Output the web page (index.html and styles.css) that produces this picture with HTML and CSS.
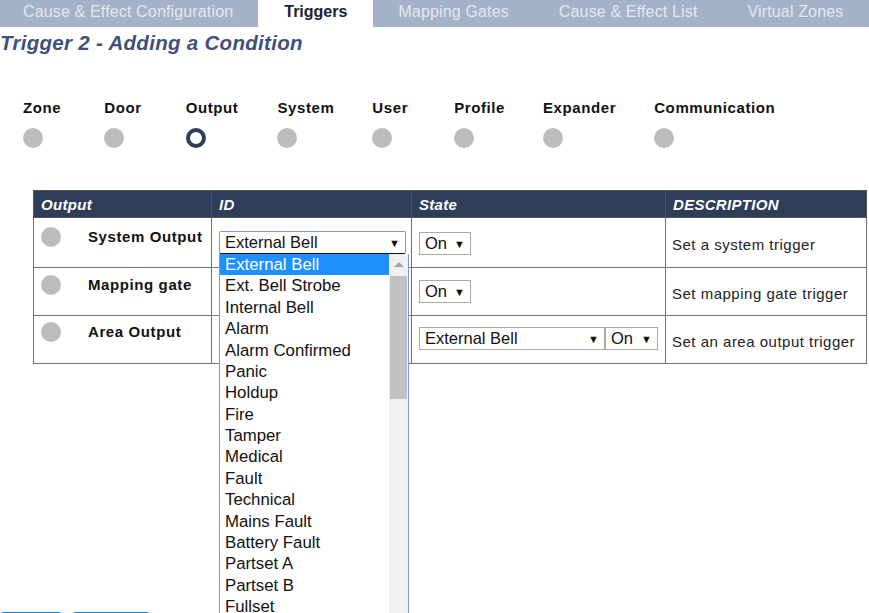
FILE: index.html
```html
<!DOCTYPE html>
<html>
<head>
<meta charset="utf-8">
<link rel="stylesheet" href="styles.css">
</head>
<body>
<nav class="tabs">
  <div class="tab">Cause &amp; Effect Configuration</div>
  <div class="tab active">Triggers</div>
  <div class="tab">Mapping Gates</div>
  <div class="tab">Cause &amp; Effect List</div>
  <div class="tab">Virtual Zones</div>
</nav>
<h1 class="title">Trigger 2 - Adding a Condition</h1>

<div class="steps">
  <div class="step"><span class="step-label">Zone</span><span class="dot"></span></div>
  <div class="step"><span class="step-label">Door</span><span class="dot"></span></div>
  <div class="step"><span class="step-label">Output</span><span class="dot ring"></span></div>
  <div class="step"><span class="step-label">System</span><span class="dot"></span></div>
  <div class="step"><span class="step-label">User</span><span class="dot"></span></div>
  <div class="step"><span class="step-label">Profile</span><span class="dot"></span></div>
  <div class="step"><span class="step-label">Expander</span><span class="dot"></span></div>
  <div class="step"><span class="step-label">Communication</span><span class="dot"></span></div>
</div>

<table class="grid">
  <colgroup>
    <col class="c1"><col class="c2"><col class="c3"><col class="c4">
  </colgroup>
  <thead>
    <tr class="hr"><th>Output</th><th>ID</th><th>State</th><th>DESCRIPTION</th></tr>
  </thead>
  <tbody>
    <tr class="r1">
      <td class="top"><div class="out"><span class="dot"></span><span class="out-label">System Output</span></div></td>
      <td class="top idcell">
        <div class="sel sel-id focus"><span>External Bell</span><span class="arr">▼</span></div>
        <div class="list">
          <div class="items">
            <div class="item hl">External Bell</div>
            <div class="item">Ext. Bell Strobe</div>
            <div class="item">Internal Bell</div>
            <div class="item">Alarm</div>
            <div class="item">Alarm Confirmed</div>
            <div class="item">Panic</div>
            <div class="item">Holdup</div>
            <div class="item">Fire</div>
            <div class="item">Tamper</div>
            <div class="item">Medical</div>
            <div class="item">Fault</div>
            <div class="item">Technical</div>
            <div class="item">Mains Fault</div>
            <div class="item">Battery Fault</div>
            <div class="item">Partset A</div>
            <div class="item">Partset B</div>
            <div class="item">Fullset</div>
          </div>
          <div class="sb"><div class="sb-up"></div><div class="sb-thumb"></div></div>
        </div>
      </td>
      <td class="top st"><div class="sel sel-on"><span>On</span><span class="arr">▼</span></div></td>
      <td class="desc">Set a system trigger</td>
    </tr>
    <tr class="r2">
      <td class="top"><div class="out"><span class="dot"></span><span class="out-label">Mapping gate</span></div></td>
      <td></td>
      <td class="top st"><div class="sel sel-on"><span>On</span><span class="arr">▼</span></div></td>
      <td class="desc">Set mapping gate trigger</td>
    </tr>
    <tr class="r3">
      <td class="top"><div class="out"><span class="dot"></span><span class="out-label">Area Output</span></div></td>
      <td></td>
      <td class="top st"><div class="pair"><div class="sel sel-area"><span>External Bell</span><span class="arr">▼</span></div><div class="sel sel-on2"><span>On</span><span class="arr">▼</span></div></div></td>
      <td class="desc">Set an area output trigger</td>
    </tr>
  </tbody>
</table>

<div class="buttons">
  <div class="btn b1"></div>
  <div class="btn b2"></div>
</div>
</body>
</html>
```

FILE: styles.css
```css
html, body {
  margin: 0;
  padding: 0;
  overflow: hidden;
  background: #ffffff;
  font-family: "Liberation Sans", Arial, sans-serif;
  color: #111;
}

.tabs {
  display: flex;
  height: 27px;
  background: #a3b2c8;
  overflow: hidden;
}
.tab {
  flex: none;
  white-space: nowrap;
  padding: 0 25px;
  line-height: 23px;
  font-size: 16px;
  letter-spacing: 0.15px;
  color: #e4e7ec;
}
.tab:first-child { padding-left: 23px; padding-right: 25px; }
.tab.active {
  background: #ffffff;
  color: #1b2233;
  font-weight: bold;
  letter-spacing: 0;
  padding: 0 26px;
}

.title {
  margin: 4px 0 0 0;
  font-size: 20.5px;
  font-style: italic;
  font-weight: bold;
  color: #3e507c;
  letter-spacing: 0.3px;
  line-height: 24px;
}

.steps {
  display: flex;
  padding-left: 23px;
  margin-top: 44px;
  gap: 41px;
}
.step {
  display: flex;
  flex-direction: column;
  gap: 12px;
}
.step:nth-child(2) { margin-left: 2px; }
.step:nth-child(3) { margin-left: 3px; }
.step:nth-child(4) { margin-left: -2px; }
.step:nth-child(5) { margin-left: -3px; }
.step:nth-child(6) { margin-left: 5px; }
.step:nth-child(7) { margin-left: -3px; }
.step:nth-child(8) { margin-left: -3px; }
.step-label {
  font-size: 15px;
  font-weight: bold;
  letter-spacing: 0.6px;
  line-height: 17px;
  color: #111;
}
.dot {
  display: block;
  width: 20px;
  height: 20px;
  border-radius: 50%;
  background: #bcbcbc;
  flex: none;
}
.dot.ring {
  box-sizing: border-box;
  background: #fff;
  border: 4px solid #2e3d5a;
}

.grid {
  margin: 42px 0 0 33px;
  border-collapse: collapse;
  width: 833px;
  table-layout: fixed;
  font-size: 15px;
}
.c1 { width: 178px; }
.c2 { width: 200px; }
.c3 { width: 254px; }
.c4 { width: 201px; }
.grid th, .grid td {
  border: 1px solid #6f6f6f;
  padding: 0 7px;
  text-align: left;
}
.grid th {
  background: #2e3d58;
  color: #ffffff;
  font-style: italic;
  font-weight: bold;
  letter-spacing: 0.3px;
  border-color: #555;
}
.grid tr.hr { height: 27px; }
.grid tr.r1 { height: 50px; }
.grid tr.r2 { height: 48px; }
.grid tr.r3 { height: 48px; }
.grid td.top { vertical-align: top; }
.grid td.desc {
  vertical-align: middle;
  letter-spacing: 0.5px;
  color: #222;
  padding-left: 6px;
  padding-top: 3px;
}

.out {
  display: flex;
  align-items: flex-start;
  gap: 27px;
  padding-top: 9px;
}
.r2 .out { padding-top: 7px; }
.r3 .out { padding-top: 6px; }
.out-label {
  font-weight: bold;
  letter-spacing: 0.6px;
  line-height: 18px;
  padding-top: 1px;
  color: #111;
}

.sel {
  box-sizing: border-box;
  display: flex;
  align-items: center;
  justify-content: space-between;
  height: 23px;
  border: 1px solid #a9a9a9;
  background: #fff;
  font-size: 16.5px;
  color: #111;
  padding: 0 5px 0 5px;
}
.arr {
  font-size: 11px;
  color: #111;
}
.idcell { position: relative; }
.sel-id {
  margin-top: 13px;
  width: 187px;
}
.sel.focus {
  border-color: #7a9ad4;
  border-radius: 2px;
  border-bottom-color: #111;
}
.st .sel { margin-top: 14px; }
.r2 .st .sel { margin-top: 12px; }
.sel-on { width: 52px; }
.st .pair { display: flex; margin-top: 11px; }
.st .pair .sel { margin-top: 0; }
.sel-area { width: 186px; }
.sel-on2 { width: 53px; }

.list {
  position: absolute;
  left: 7px;
  top: 36px;
  width: 190px;
  height: 372px;
  overflow: hidden;
  box-sizing: border-box;
  border: 1px solid #7c9ccf;
  border-top: none;
  background: #fff;
  display: flex;
  z-index: 5;
}
.items {
  flex: 1;
  font-size: 16.8px;
  color: #111;
}
.item {
  height: 21.375px;
  line-height: 21.375px;
  padding-left: 5px;
  white-space: nowrap;
}
.item.hl {
  background: #1e90ff;
  color: #ffffff;
}
.sb {
  width: 19px;
  background: #f0f0f0;
}
.sb-up {
  width: 0;
  height: 0;
  margin: 8px auto 0 auto;
  border-left: 5px solid transparent;
  border-right: 5px solid transparent;
  border-bottom: 5px solid #a3a3a3;
}
.sb-thumb {
  margin: 9px 1px 0 1px;
  height: 123px;
  background: #c1c1c1;
}

.buttons {
  display: flex;
  gap: 10px;
  margin-top: 248px;
}
.btn {
  height: 30px;
  border-radius: 4px;
  background: #0c7fcf;
}
.b1 { width: 62px; }
.b2 { width: 78px; }
```
